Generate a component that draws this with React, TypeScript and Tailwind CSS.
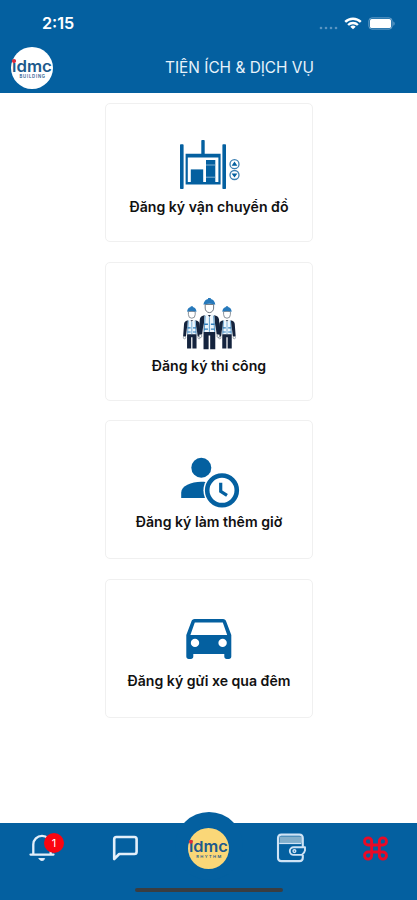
import type { ReactNode } from 'react';

const LiftIcon = () => (
  <svg viewBox="0 0 80 65" className="w-20 h-[65px]" fill="#0460a0">
    <rect x="10" y="14.3" width="3.6" height="44.7" rx="0.8" />
    <rect x="52.4" y="14.3" width="3.6" height="44.7" rx="0.8" />
    <rect x="31.3" y="10" width="3.4" height="15.5" rx="0.8" />
    <path d="M15.6 23.8h35v30.7h-35zM17.8 27.6v24.4h30.6V27.6z" fillRule="evenodd" />
    <rect x="20.8" y="39.4" width="12.4" height="14" />
    <rect x="36" y="30" width="9.3" height="23.4" />
    <path d="M36 35h9.3M36 47.2h9.3" stroke="#8fb8d6" strokeWidth="0.9" />
    <g fill="none" stroke="#3b7fb2" strokeWidth="1.3">
      <circle cx="64.5" cy="34.2" r="4.5" />
      <circle cx="64.5" cy="45" r="4.5" />
    </g>
    <path d="M64.5 31.4l2.9 4.4h-5.8zM61.6 43.4h5.8l-2.9 4.2z" />
  </svg>
);

const Worker = () => (
  <g>
    {/* Body, arms and legs */}
    <path d="M-4.4 17.5C-8 18.2-9.4 19.5-9.8 22L-11 37.5h3.6L-6 26v26.5h5.2V38.5h1.6v14H6V26l1.4 11.5H11L9.8 22C9.4 19.5 8 18.2 4.4 17.5z" fill="#14233d" />
    <path d="M-5 17.8L-2.2 16.6 0 19.5l2.2-2.9L5 17.8 6.2 35H-6.2z" fill="#eef6fc" />
    <path d="M-4.3 18.3L-5.3 34.7M4.3 18.3l1 16.4M0 19.8v15" stroke="#5a9bcb" strokeWidth="1" fill="none" />
    <path d="M-5.3 27h3.8M1.5 27h3.8M-5.5 32h4M1.5 32h4" stroke="#2f7dbb" strokeWidth="1.3" />
    <circle cx="-9.2" cy="39" r="1.5" fill="#fff" stroke="#53616f" strokeWidth="0.6" />
    <circle cx="9.2" cy="39" r="1.5" fill="#fff" stroke="#53616f" strokeWidth="0.6" />
    {/* Head and hard hat */}
    <path d="M-4.3 6.8v3.7a4.3 4.6 0 0 0 8.6 0V6.8z" fill="#fff" stroke="#5d6772" strokeWidth="0.9" />
    <path d="M-6 7.2C-5.6 3.2-3.4 1.5-1.4 1.2V.2h2.8v1C3.4 1.5 5.6 3.2 6 7.2 2.5 5.8-2.5 5.8-6 7.2z" fill="#2779bb" />
  </g>
);

const WorkersIcon = () => (
  <svg viewBox="0 0 80 65" className="w-20 h-[65px]">
    <g transform="translate(21.8 16) scale(0.79 0.81)">
      <Worker />
    </g>
    <g transform="translate(57 16) scale(0.79 0.81)">
      <Worker />
    </g>
    <g transform="translate(39.4 7.8) scale(0.98)">
      <Worker />
    </g>
  </svg>
);

const OvertimeIcon = () => (
  <svg viewBox="0 0 80 60" className="w-20 h-[60px]">
    <circle cx="31.3" cy="17.7" r="10" fill="#0460a0" />
    <path d="M11.2 48v-5.3c0-7 10-11 20-11 3.6 0 7 .5 10 1.5V48z" fill="#0460a0" />
    <circle cx="52" cy="40.3" r="18.6" fill="#fff" />
    <circle cx="52" cy="40.3" r="14.8" fill="#fff" stroke="#0460a0" strokeWidth="4.6" />
    <path d="M50.7 32.8v8.5l6.3 4" fill="none" stroke="#0460a0" strokeWidth="3.2" />
  </svg>
);

const CarIcon = () => (
  <svg viewBox="0 0 80 60" className="w-20 h-[60px]">
    <path
      d="M56.3 11.7C55.8 10 54.6 9 53 9H24.6c-1.6 0-2.8 1-3.3 2.7L16.3 25v21.5c0 1.5 1 2.5 2.4 2.5h2.2c1.4 0 2.4-1 2.4-2.5V44h31v2.5c0 1.5 1 2.5 2.4 2.5h2.2c1.4 0 2.4-1 2.4-2.5V25zM24.8 12.6h28L57.2 25H20.4z"
      fill="#0460a0"
      fillRule="evenodd"
    />
    <circle cx="25" cy="32.9" r="4.2" fill="#fff" />
    <circle cx="52.6" cy="32.9" r="4.2" fill="#fff" />
  </svg>
);

type Service = { label: string; icon: ReactNode; pad: string; labelClass: string };

const services: Service[] = [
  { label: 'Đăng ký vận chuyển đồ', icon: <LiftIcon />, pad: 'pt-[26px]', labelClass: 'mt-[2px]' },
  { label: 'Đăng ký thi công', icon: <WorkersIcon />, pad: 'pt-[27px]', labelClass: 'mt-px' },
  { label: 'Đăng ký làm thêm giờ', icon: <OvertimeIcon />, pad: 'pt-[29px]', labelClass: 'mt-[2px]' },
  { label: 'Đăng ký gửi xe qua đêm', icon: <CarIcon />, pad: 'pt-[30px]', labelClass: 'mt-px' },
];

const Logo = ({ className, sub }: { className: string; sub: string }) => (
  <svg viewBox="0 0 42 42" className={className}>
    <circle cx="21" cy="21" r="21" fill="currentColor" />
    <g fontFamily="Inter, sans-serif" fill="#1d5a8c">
      <text x="1" y="25" fontSize="15.5" fontWeight="600" textLength="39.8" lengthAdjust="spacingAndGlyphs">
        idmc
      </text>
      <text x="8.5" y="31.2" fontSize="4.2" fontWeight="600" textLength="25.5" lengthAdjust="spacing">
        {sub}
      </text>
    </g>
    <circle cx="3" cy="14.1" r="2.1" fill="#e02b3c" />
  </svg>
);

const StatusBar = () => (
  <div className="flex h-[46px] items-center justify-between pl-[42px] pr-[21px] text-white">
    <span className="text-[16.2px] font-semibold">2:15</span>
    <div className="flex items-center">
      <svg viewBox="0 0 20 4" className="mt-[9px] h-1 w-5" fill="#5a94c1">
        <circle cx="2" cy="2" r="1.3" />
        <circle cx="7" cy="2" r="1.3" />
        <circle cx="12" cy="2" r="1.3" />
        <circle cx="17" cy="2" r="1.3" />
      </svg>
      <svg viewBox="0 0 18 13" className="ml-[5px] h-[13px] w-[18px]" fill="none" stroke="#fff" strokeWidth="2.4">
        <path d="M1.2 4.9a11.2 11.2 0 0 1 15.6 0" />
        <path d="M4.1 8a7 7 0 0 1 9.8 0" />
        <path d="M9 12.3L6.3 9.8a3.9 3.9 0 0 1 5.4 0z" fill="#fff" stroke="none" />
      </svg>
      <svg viewBox="0 0 28 13" className="ml-1.5 h-[13px] w-7">
        <rect x="0.9" y="0.9" width="23.2" height="11.2" rx="3" fill="none" stroke="#6fa3ca" strokeWidth="1" />
        <rect x="2" y="2" width="21" height="9" rx="1.6" fill="#fff" />
        <path d="M25.4 4.4c1.6.5 1.6 3.7 0 4.2z" fill="#6fa3ca" />
      </svg>
    </div>
  </div>
);

const BellIcon = () => (
  <svg viewBox="0 0 28 28" className="h-7 w-7" fill="none" stroke="#e3effa" strokeWidth="2.3" strokeLinecap="round">
    <path d="M2.5 20.6h23M5.3 20.3V10.5a8.7 8.7 0 0 1 17.4 0v9.8" />
    <path d="M11.2 24.6h5.4c-.6 2.6-4.8 2.6-5.4 0z" fill="#e3effa" strokeWidth="1" />
  </svg>
);

const ChatIcon = () => (
  <svg viewBox="0 0 26 26" className="h-[26px] w-[26px]" fill="none" stroke="#e3effa" strokeWidth="2.6" strokeLinejoin="round">
    <path d="M2.2 24V4.2c0-1.3.9-2.2 2.2-2.2h18c1.3 0 2.2.9 2.2 2.2v12.6c0 1.3-.9 2.2-2.2 2.2H7.2z" />
  </svg>
);

const WalletIcon = () => (
  <svg viewBox="0 0 30 30" className="h-[30px] w-[30px]" fill="none" stroke="#cfe3f5" strokeWidth="2.1">
    <rect x="3.5" y="3.4" width="22.5" height="6.4" fill="#82aeca" stroke="none" />
    <path d="M26.8 14V5c0-2.3-1.1-3.4-3.4-3.4H5.4C3.1 1.6 2 2.7 2 5v19.7c0 2.3 1.1 3.4 3.4 3.4h18c2.3 0 3.4-1.1 3.4-3.4V22" />
    <path d="M3.2 10.4h22.2" strokeWidth="1.4" />
    <path d="M29 14.3H17.6a3.7 3.7 0 0 0 0 7.6h8.3c1.8-1.7 2.9-3 3.1-4.6z" fill="#0460a0" strokeWidth="1.9" strokeLinejoin="round" />
    <circle cx="18.4" cy="18.1" r="1.4" strokeWidth="1.4" />
  </svg>
);

const CommandIcon = () => (
  <svg viewBox="0 0 26 26" className="h-[25px] w-[25px]" fill="none" stroke="#ea0a26" strokeWidth="3">
    <path d="M9 9V5.6A3.7 3.7 0 1 0 5.3 9.3h15.4A3.7 3.7 0 1 0 17 5.6v14.8a3.7 3.7 0 1 0 3.7-3.7H5.3A3.7 3.7 0 1 0 9 20.4z" />
  </svg>
);

const App = () => {
  return (
    <div className="flex h-[900px] w-[417px] flex-col overflow-hidden bg-white font-[Inter,'Noto_Sans',sans-serif]">
      {/* Header */}
      <header className="h-[93px] shrink-0 bg-[#0460a0]">
        <StatusBar />
        <div className="flex h-11 items-center pl-[11px]">
          <Logo className="h-[42px] w-[42px] text-white" sub="BUILDING" />
          <h1 className="ml-[112px] whitespace-nowrap text-[15.4px] leading-5 text-[#e8f2fa]">
            TIỆN ÍCH &amp; DỊCH VỤ
          </h1>
        </div>
      </header>

      {/* Services */}
      <main className="flex flex-1 flex-col items-center gap-[19.7px] pl-px pt-[10px]">
        {services.map(({ label, icon, pad, labelClass }) => (
          <button
            key={label}
            className={`flex h-[139px] w-[208px] flex-col items-center rounded-[5px] border-[1.5px] border-[#f0f0f0] bg-white ${pad}`}
          >
            <div className="pl-[2px]">{icon}</div>
            <span className={`whitespace-nowrap text-[14.1px] font-semibold leading-5 text-[#111] ${labelClass}`}>
              {label}
            </span>
          </button>
        ))}
      </main>

      {/* Bottom tabs */}
      <footer className="relative h-[77px] shrink-0 bg-[#0460a0]">
        <div className="absolute -top-[11px] left-[175px] h-[68px] w-[68px] rounded-full bg-[#0460a0]" />
        <nav className="relative flex h-[50px] items-center pl-7">
          <div className="relative">
            <BellIcon />
            <span className="absolute -top-px left-4 flex h-5 w-5 items-center justify-center rounded-full bg-[#fb0510] text-[11px] text-white">
              1
            </span>
          </div>
          <div className="ml-14">
            <ChatIcon />
          </div>
          <Logo className="ml-[50px] h-[41px] w-[41px] text-[#fad778]" sub="RHYTHM" />
          <div className="ml-[47px]">
            <WalletIcon />
          </div>
          <div className="ml-[57px]">
            <CommandIcon />
          </div>
        </nav>
        <div className="mx-auto mt-[15px] h-1 w-[148px] rounded-full bg-[#3b3d40]" />
      </footer>
    </div>
  );
};

export default App;
